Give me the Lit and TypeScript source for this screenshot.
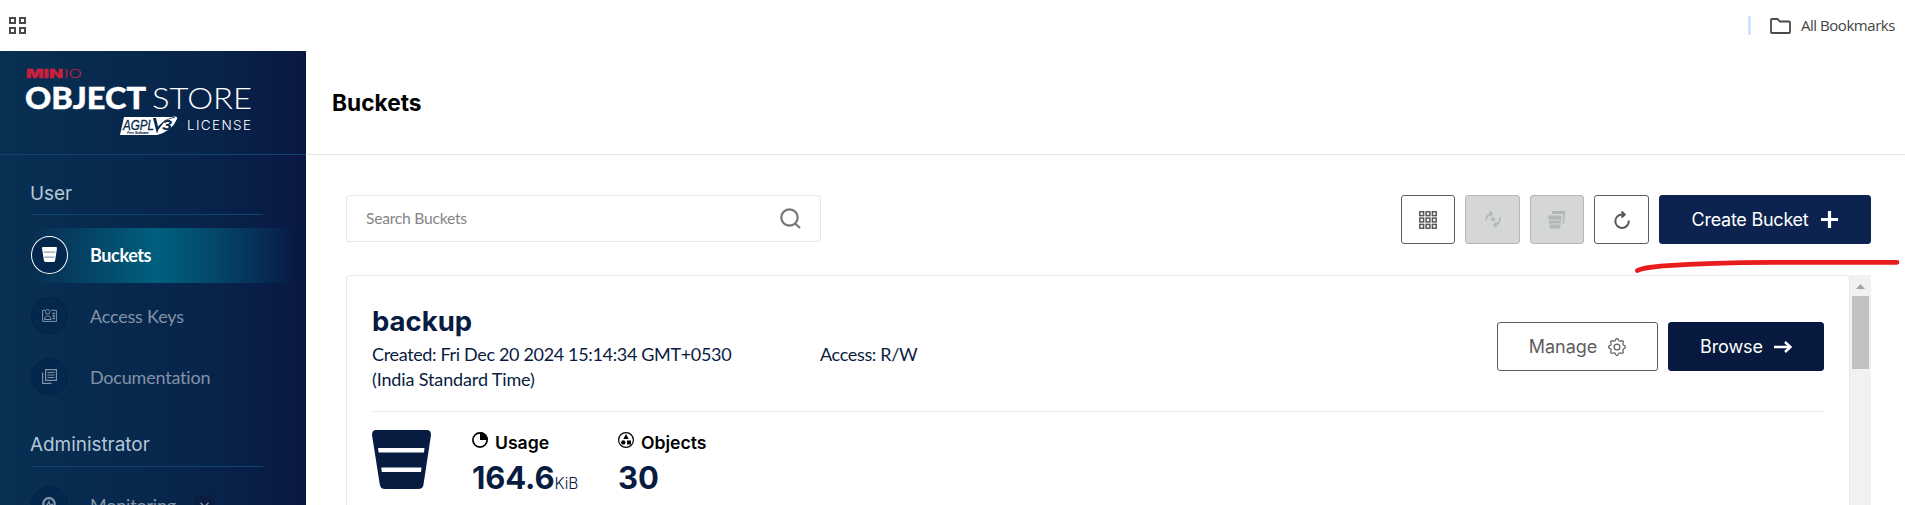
import { LitElement, html, css, svg } from "lit";
import { customElement } from "lit/decorators.js";

const bucket = (cls: string, gap: string) => html`<svg class=${cls} viewBox="0 0 59 59">
  <path fill="currentColor" d="M4 0H55Q59 0 59 5L51.500 54.500Q51 59 46 59H13Q8.500 59 7.800 54.500L0 5Q0 0 4 0Z" />
  <path fill=${gap} d="M6 18H52.500L52 22.500H6.600ZM9.200 37.500H49.500L49 42H9.800Z" />
</svg>`;

const cardIcon = html`<svg class="glyph" viewBox="0 0 15 13" fill="none" stroke="currentColor">
  <path d="M3 1.300H.6V12.400H14.400V1.300H9" /><circle cx="5.700" cy="2.800" r="2.200" />
  <path d="M2.500 10.500C2.500 5.500 9 5.500 9 10.500Z" /><path stroke-width="1.500" d="M10.500 4.500H13M10.500 7H13M10.500 9.500H13" />
</svg>`;

const docIcon = html`<svg class="glyph" viewBox="0 0 15 15" fill="none" stroke="currentColor">
  <path stroke-width="1.200" d="M3.600.6H14.400V11.400H3.600Z" /><path stroke-width="1.200" d="M.6 3.500V14.400H9.500" />
  <path d="M5.500 3.500H12.500M5.500 6H12.500M5.500 8.500H12.500" />
</svg>`;

const monitorIcon = html`<svg class="glyph" viewBox="0 0 15 15" fill="none" stroke="currentColor">
  <circle cx="7" cy="6.800" r="5.700" stroke-width="2.300" /><path stroke-width="1.300" d="M4.500 7.500H5.500L7 4.500L8.500 9.500L9.500 7.500H11" />
</svg>`;

const nine = html`<svg width="18" height="18" viewBox="0 0 18 18" fill="none" stroke="#55585a" stroke-width="1.500">
  ${[0, 1, 2].map((r) => [0, 1, 2].map((c) => svg`<rect x=${0.8 + c * 6.300} y=${0.8 + r * 6.300} width="3.800" height="3.800" />`))}
</svg>`;

const replicate = html`<svg width="16" height="17" viewBox="0 0 16 17" fill="none" stroke="#b4b7b7" stroke-width="1.700">
  <path d="M1.200 9.500C1 5.500 3 3.300 6.500 2.800M4.500.5L7 2.800L4.800 5M14.800 6.500C15.200 11 13 13.300 9.500 13.800M11.500 11.500L9.200 13.800L11.500 16.200" />
  <circle cx="8" cy="8.300" r="2" fill="#b4b7b7" stroke="none" />
</svg>`;

const multi = html`<svg width="18" height="18" viewBox="0 0 18 18">
  <path fill="#b4b7b7" d="M4 0H17.500L16 13H14.500L15.500 3H4ZM0 4.500H14L12 17.500H2Z" />
  <path stroke="#d5d7d7" d="M1 9H13M1.500 13H12.500" />
</svg>`;

const refresh = html`<svg width="16" height="18" viewBox="0 0 16 18" fill="none" stroke="#55585a" stroke-width="2">
  <path d="M14.700 9.500A6.700 6.700 0 1 1 8 3.500H10.500M7.500 .5L10.700 3.500L7.500 6.500" />
</svg>`;

const gearPath = (() => {
  const pts: string[] = [];
  for (let i = 0; i < 64; i++) {
    const a = (i / 64) * Math.PI * 2;
    const r = 7.400 + 0.900 * Math.tanh(2.500 * Math.cos(a * 8));
    pts.push((9 + r * Math.sin(a)).toFixed(2) + " " + (9 - r * Math.cos(a)).toFixed(2));
  }
  return "M" + pts.join("L") + "Z";
})();

const gear = html`<svg width="18" height="18" viewBox="0 0 18 18" fill="none" stroke="#5e5e5e" stroke-width="1.200">
  <path d=${gearPath} /><circle cx="9" cy="9" r="2.900" />
</svg>`;

const logo = html`<svg class="logo" viewBox="0 0 306 103">
  <g fill="#c9203e" font-family="Inter">
    <text x="26" y="27" font-size="12" font-weight="900" textLength="37" lengthAdjust="spacingAndGlyphs" stroke="#c9203e" stroke-width=".3">MIN</text>
    <text x="64" y="27" font-size="12" font-weight="300" textLength="18" lengthAdjust="spacingAndGlyphs">IO</text>
  </g>
  <g fill="#fff">
    <text x="25" y="57.700" font-size="30" font-weight="900" font-family="Lato" textLength="121" lengthAdjust="spacingAndGlyphs" stroke="#fff" stroke-width=".4">OBJECT</text>
    <text x="152" y="57.700" font-size="30" font-weight="300" font-family="Lato" textLength="100" lengthAdjust="spacingAndGlyphs">STORE</text>
    <text x="187" y="79" font-size="13.500" font-weight="300" font-family="Inter" textLength="64">LICENSE</text>
    <path d="M124 66H172Q178 64.500 177 68Q172 80 157 84H120Z" />
  </g>
  <g fill="#08294d" font-family="Liberation Sans" font-style="italic">
    <text x="123" y="78.500" font-size="14" textLength="31" lengthAdjust="spacingAndGlyphs" stroke="#08294d" stroke-width=".3">AGPL</text>
    <text x="127" y="82.800" font-size="4" font-weight="700" textLength="22">Free Software</text>
    <path d="M153 67L156.500 81L167 67.500L158 75.500L156 67Z" />
    <path fill="none" stroke="#08294d" stroke-width=".8" d="M157 82C157 74 168 66.500 175 66.500" />
    <text x="162" y="78.500" font-size="14" font-weight="700" textLength="10" lengthAdjust="spacingAndGlyphs">3</text>
  </g>
</svg>`;

@customElement("app-root")
export class AppRoot extends LitElement {
  static styles = css`
    :host { display: block; height: 505px; overflow: hidden; background: #fff; font-family: Inter, sans-serif; color: #081c42; }
    * { box-sizing: border-box; }
    svg { display: block; flex: none; }
    .bar { height: 51px; display: flex; align-items: center; justify-content: space-between; padding: 0 10px 0 8px; }
    .marks { display: flex; align-items: center; font: 15px "Open Sans", sans-serif; letter-spacing: -.45px; color: #444; }
    .marks span { padding-bottom: 1px; }
    .sep { width: 3px; height: 19px; background: #d3e3fd; margin-right: 19px; }
    .folder { margin-right: 10px; }
    .body { display: flex; height: 454px; }
    .side { width: 306px; flex: none; height: 454px; overflow: hidden; background: linear-gradient(90deg, #073052 0%, #08234a 70%, #091843 100%); }
    .brand { height: 104px; border-bottom: 1px solid #11446a; }
    .logo { width: 306px; height: 103px; }
    .head { margin: 0 43px 0 31px; border-bottom: 1px solid #10446c; height: 60px; padding-top: 27px; font-size: 18.900px; line-height: 24px; color: #b5c8d8; text-indent: -1px; }
    .head.second { height: 56px; padding-top: 22px; }
    .item { display: flex; align-items: center; height: 55px; margin: 0 10px 6px 31px; padding-bottom: 2px; font: 18px Lato, sans-serif; letter-spacing: -.2px; color: #8393a7; }
    .active { margin-top: 13px; color: #fff; font-weight: 700; letter-spacing: -.38px; background: linear-gradient(90deg, transparent, #00607f 47%, transparent); }
    .first { margin-top: 11px; }
    .disc { width: 37px; height: 37px; border-radius: 50%; background: #03274d; border: 1px solid #06223f; display: grid; place-items: center; margin-right: 22px; }
    .active .disc { border-color: #fff; height: 38px; }
    .glyph { width: 15px; height: 15px; }
    .chev { width: 19px; height: 19px; background: #0a1e42; border-radius: 2px; margin-left: 19px; display: grid; place-items: center; }
    .main { flex: 1; min-width: 0; }
    .title { height: 104px; border-bottom: 1px solid #e5e5e5; padding: 0 26px; display: flex; align-items: center; font-size: 22.700px; font-weight: 700; color: #000; }
    .tools { display: flex; margin: 40px 34px 0 40px; height: 49px; }
    .search { width: 475px; height: 47px; border: 1px solid #e5e6e6; border-radius: 3px; display: flex; align-items: center; justify-content: space-between; padding: 0 19px; font: 15.700px Lato, sans-serif; letter-spacing: -.27px; color: #858585; margin-right: auto; }
    .search span { padding-bottom: 1px; }
    .btn { height: 49px; border: 1px solid #5e5e5e; border-radius: 3px; background: #fff; display: flex; align-items: center; justify-content: center; margin-left: 10px; width: 55px; font-size: 18px; color: #5e5e5e; }
    .slim { width: 54px; }
    .off { background: #d5d7d7; border-color: #b4b7b7; }
    .create { width: 212px; background: #0c2350; border-color: #0c2350; color: #fff; gap: 13px; letter-spacing: -.25px; }
    .list { display: flex; margin: 31px 34px 0 40px; height: 300px; }
    .card { flex: 1; border: 1px solid #e5e6e6; border-radius: 3px 3px 0 0; padding: 29px 25px 0 25px; }
    .top { display: flex; justify-content: space-between; height: 107px; border-bottom: 1px solid #eaedee; }
    .name { font-size: 27.500px; line-height: 34px; font-weight: 700; margin-top: -1px; }
    .meta { display: flex; font: 18px/25px Lato, sans-serif; margin-top: 4px; letter-spacing: -.34px; }
    .created { width: 448px; }
    .zone { letter-spacing: -.13px; }
    .acts { display: flex; padding-top: 17px; }
    .manage { width: 161px; gap: 11px; }
    .browse { width: 156px; background: #07193e; border-color: #07193e; color: #fff; gap: 11px; letter-spacing: -.1px; }
    .stats { display: flex; padding-top: 18px; }
    .big { width: 59px; height: 59px; color: #081c42; margin-right: 41px; }
    .stat { width: 146px; }
    .label { display: flex; font-size: 17.600px; font-weight: 600; line-height: 22px; color: #000; height: 26px; padding-top: 2px; gap: 7px; }
    .value { font-size: 31px; line-height: 38px; font-weight: 700; margin-top: 3px; white-space: nowrap; letter-spacing: -.1px; }
    .unit { font-size: 15.500px; font-weight: 300; }
    .scroll { width: 21px; background: #f1f1f1; padding: 9px 2px 0 2px; }
    .thumb { width: 17px; height: 73px; background: #c1c1c1; margin-top: 7px; }
    .arrow { margin: 0 auto; }
    .stroke { position: absolute; left: 1630px; top: 255px; }
  `;

  render() {
    return html`
      <div class="bar">
        <svg width="19" height="19" viewBox="0 0 19 19" fill="none" stroke="#4a4a4a" stroke-width="2"><path d="M2 2H7V7H2ZM12 2H17V7H12ZM2 12H7V17H2ZM12 12H17V17H12Z" /></svg>
        <div class="marks">
          <div class="sep"></div>
          <svg class="folder" width="21" height="16" viewBox="0 0 21 16" fill="none" stroke="#4a4a4a" stroke-width="1.800"><path d="M1 2Q1 1 2 1H7.500L10 3.500H19Q20 3.500 20 4.500V14Q20 15 19 15H2Q1 15 1 14Z" /></svg>
          <span>All Bookmarks</span>
        </div>
      </div>
      <div class="body">
        <div class="side">
          <div class="brand">${logo}</div>
          <div class="head">User</div>
          <div class="item active"><div class="disc">${bucket("glyph", "#8fa0b5")}</div>Buckets</div>
          <div class="item"><div class="disc">${cardIcon}</div>Access Keys</div>
          <div class="item"><div class="disc">${docIcon}</div>Documentation</div>
          <div class="head second">Administrator</div>
          <div class="item first"><div class="disc">${monitorIcon}</div>Monitoring<div class="chev"><svg width="9" height="6" viewBox="0 0 9 6" fill="none" stroke="#8393a7" stroke-width="1.300"><path d="M.5 .8L4.500 4.800L8.500 .8" /></svg></div></div>
        </div>
        <div class="main">
          <div class="title">Buckets</div>
          <div class="tools">
            <div class="search"><span>Search Buckets</span>
              <svg width="21" height="21" viewBox="0 0 21 21" fill="none" stroke="#757575" stroke-width="2.200"><circle cx="9.500" cy="9.500" r="8.200" /><path d="M14.500 15L20 20" /></svg>
            </div>
            <div class="btn slim">${nine}</div>
            <div class="btn off">${replicate}</div>
            <div class="btn off slim">${multi}</div>
            <div class="btn">${refresh}</div>
            <div class="btn create">Create Bucket<svg width="17" height="17" viewBox="0 0 17 17" stroke="#fff" stroke-width="3.200"><path d="M8.500 0V17M0 8.500H17" /></svg></div>
          </div>
          <div class="list">
            <div class="card">
              <div class="top">
                <div>
                  <div class="name">backup</div>
                  <div class="meta"><div class="created">Created: Fri Dec 20 2024 15:14:34 GMT+0530<br /><span class="zone">(India Standard Time)</span></div><div>Access: R/W</div></div>
                </div>
                <div class="acts">
                  <div class="btn manage">Manage${gear}</div>
                  <div class="btn browse">Browse<svg width="18" height="12" viewBox="0 0 18 12" fill="none" stroke="#fff" stroke-width="2.500"><path d="M0 6H16M11 1L16.500 6L11 11" /></svg></div>
                </div>
              </div>
              <div class="stats">
                ${bucket("big", "#fff")}
                <div class="stat">
                  <div class="label"><svg width="16" height="16" viewBox="0 0 16 16"><circle cx="8" cy="8" r="7.100" fill="none" stroke="#000" stroke-width="1.700" /><path d="M8 8V0A8 8 0 0 1 16 8Z" /></svg>Usage</div>
                  <div class="value">164.6<span class="unit">KiB</span></div>
                </div>
                <div class="stat">
                  <div class="label"><svg width="16" height="16" viewBox="0 0 16 16"><circle cx="8" cy="8" r="7.400" fill="none" stroke="#000" stroke-width="1.200" /><path d="M8 2L10.700 7H5.300ZM9 8.500H13V12.500H9Z" /><circle cx="5.300" cy="10.400" r="2.200" /></svg>Objects</div>
                  <div class="value">30</div>
                </div>
              </div>
            </div>
            <div class="scroll"><svg class="arrow" width="9" height="5" viewBox="0 0 9 5"><path fill="#a3a3a3" d="M0 5L4.500 0L9 5Z" /></svg><div class="thumb"></div></div>
          </div>
        </div>
      </div>
      <svg class="stroke" width="275" height="20" viewBox="0 0 275 20" fill="none" stroke="#e81c1c" stroke-width="4.800" stroke-linecap="round"><path d="M7.500 15.500C13 12.500 22 11.800 34 10.800C60 9 85 7.500 142 7.300H267" /></svg>
    `;
  }
}
